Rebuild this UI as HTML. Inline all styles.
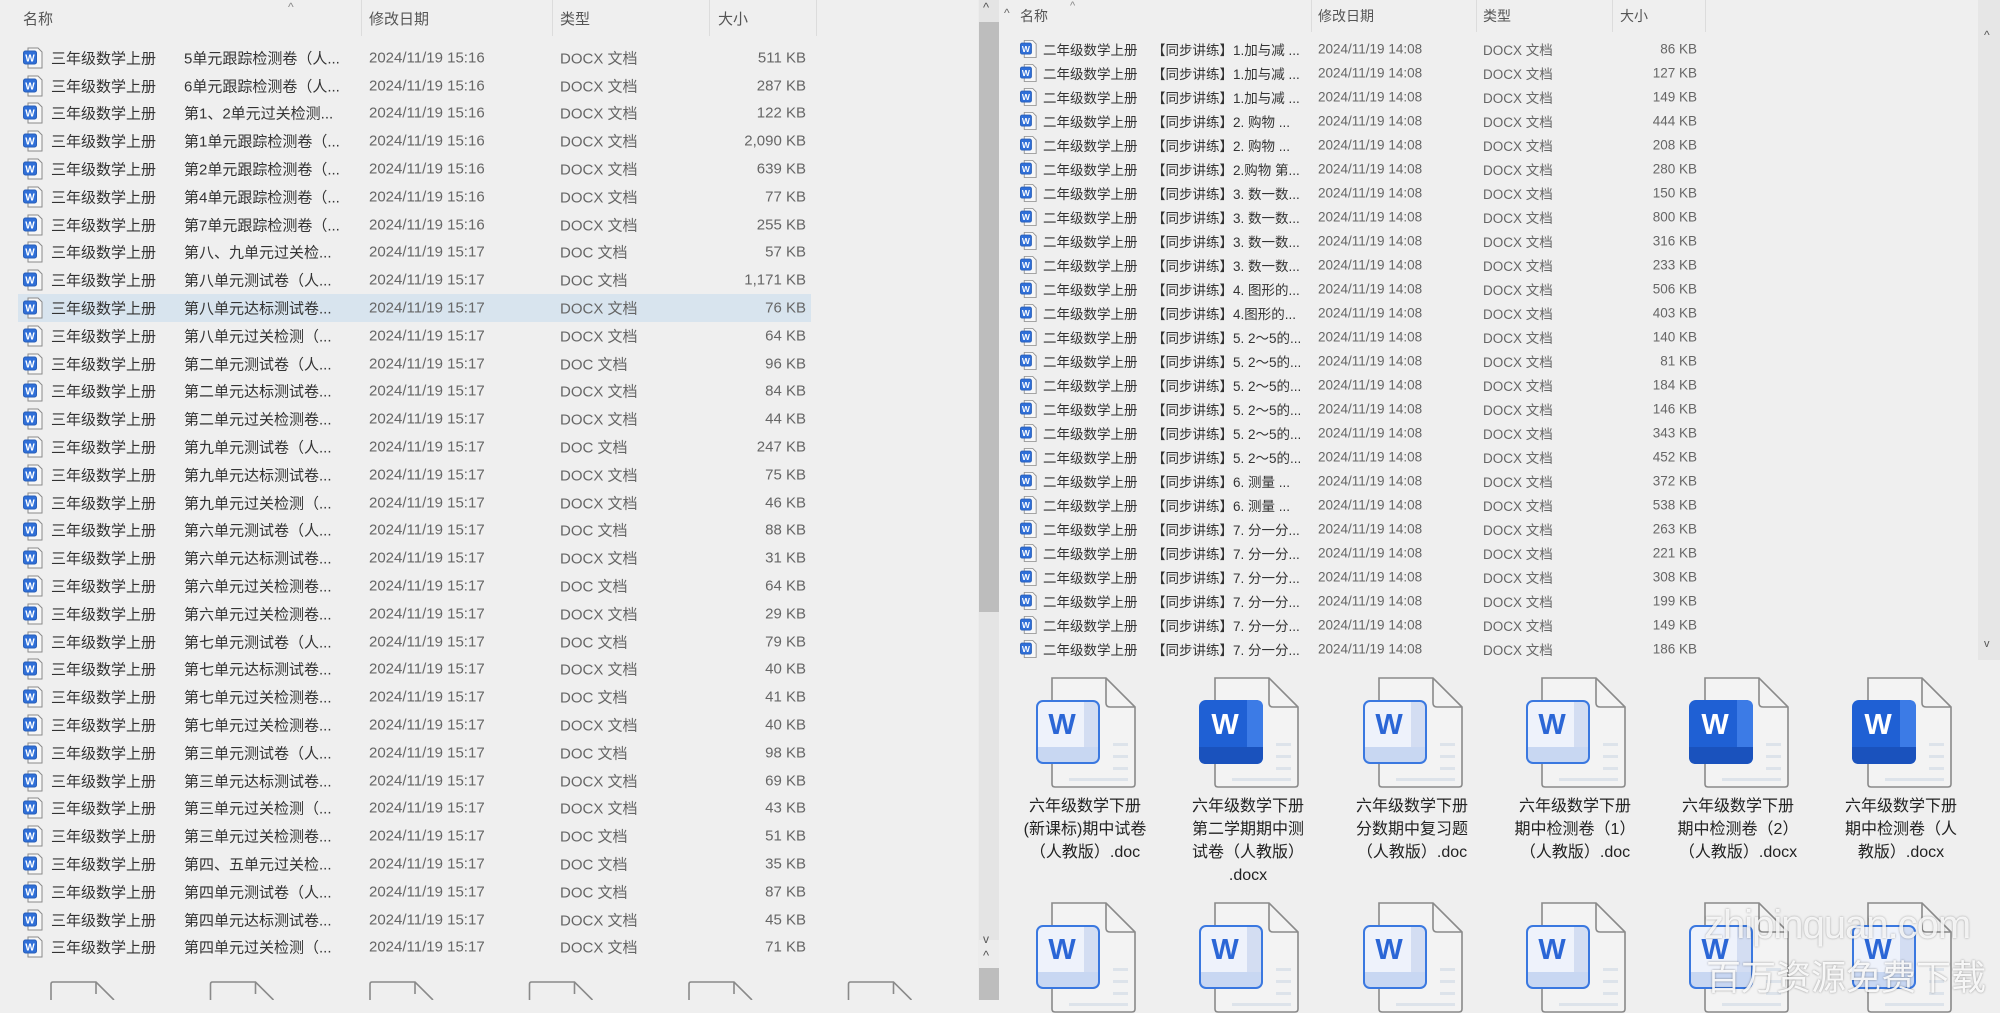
<!DOCTYPE html>
<html><head><meta charset="utf-8">
<style>
*{margin:0;padding:0;box-sizing:border-box}
body{width:2000px;height:1000px;overflow:hidden;background:#efefef;font-family:"Liberation Sans","Noto Sans CJK SC",sans-serif;position:relative}
.a{position:absolute;white-space:nowrap}
.L{position:absolute;left:0;width:978px;height:27.8px;font-size:15px;color:#555}
.L span,.R span{position:absolute;top:50%;transform:translateY(-50%)}
.L .n{left:51px;color:#333}.L .m{left:184px;color:#333}.L .d{left:369px;color:#666}.L .t{left:560px;color:#666}.L .s{right:172px;color:#666}
.L svg,.R svg{position:absolute;top:50%;transform:translateY(-50%)}
.L svg{left:23px}
.R{position:absolute;left:1000px;width:976px;height:24.03px;font-size:13.5px}
.R .n{left:43px;color:#333}.R .m{left:152px;color:#333}.R .d{left:318px;color:#666}.R .t{left:483px;color:#666}.R .s{right:279px;color:#666}
.R svg{left:20px}
.sel{background:#d8e4ee;left:18px;width:793px}
.sel svg{left:5px}.sel .n{left:33px}.sel .m{left:166px}.sel .d{left:351px}.sel .t{left:542px}.sel .s{right:5px}
.h{position:absolute;font-size:15px;color:#555}
.sep{position:absolute;width:1px;background:#dcdcdc}
.lab{position:absolute;width:160px;text-align:center;font-size:16px;line-height:23px;color:#222}
</style></head><body>
<svg width="0" height="0" style="position:absolute">
<defs>
<symbol id="si" viewBox="0 0 20 22"><path d="M5 1H15L19 5V21H5Z" fill="#f7f7f7" stroke="#8a8a8a" stroke-width="1"/><rect x="0.5" y="4" width="13" height="13" rx="2" fill="#2f6fd8" stroke="#2a5fb8"/><text x="7" y="14.5" font-size="10" font-weight="bold" fill="#fff" text-anchor="middle" font-family="Liberation Sans">W</text></symbol>
<symbol id="bl" viewBox="0 0 100 111"><path d="M16 1H70L99 30V107Q99 110 96 110H19Q16 110 16 107Z" fill="#f3f3f3" stroke="#8a8a8a" stroke-width="1.6"/><path d="M70 1V26Q70 30 74 30H99" fill="none" stroke="#8a8a8a" stroke-width="1.6"/><rect x="77" y="66" width="15" height="3" fill="#dde3ea"/><rect x="77" y="78" width="15" height="3" fill="#dde3ea"/><rect x="77" y="90" width="15" height="3" fill="#dde3ea"/><rect x="33" y="101" width="59" height="3" fill="#dde3ea"/><rect x="1" y="24" width="62" height="62" rx="6" fill="#eef2fb"/><rect x="48" y="25" width="14" height="60" fill="#d3ddf2"/><rect x="2" y="70" width="60" height="15" fill="#c8d7f2"/><rect x="1" y="24" width="62" height="62" rx="6" fill="none" stroke="#3a78e0" stroke-width="2"/><text x="26" y="57" font-size="29" font-weight="bold" fill="#2b66d6" text-anchor="middle" font-family="Liberation Sans">W</text></symbol>
<symbol id="bd" viewBox="0 0 100 111"><path d="M16 1H70L99 30V107Q99 110 96 110H19Q16 110 16 107Z" fill="#f3f3f3" stroke="#8a8a8a" stroke-width="1.6"/><path d="M70 1V26Q70 30 74 30H99" fill="none" stroke="#8a8a8a" stroke-width="1.6"/><rect x="77" y="66" width="15" height="3" fill="#dde3ea"/><rect x="77" y="78" width="15" height="3" fill="#dde3ea"/><rect x="77" y="90" width="15" height="3" fill="#dde3ea"/><rect x="33" y="101" width="59" height="3" fill="#dde3ea"/><rect x="0" y="23" width="64" height="64" rx="7" fill="#1f60d4"/><path d="M48 23H57Q64 23 64 30V80Q64 87 57 87H48Z" fill="#3c7be6"/><path d="M0 70H64V80Q64 87 57 87H7Q0 87 0 80Z" fill="#1a52bd"/><text x="26" y="57" font-size="29" font-weight="bold" fill="#fff" text-anchor="middle" font-family="Liberation Sans">W</text></symbol>
</defs></svg>

<!-- LEFT HEADER -->
<div class="a" style="left:288px;top:0;font-size:12px;color:#888">^</div>
<div class="h" style="left:23px;top:8px">名称</div>
<div class="h" style="left:369px;top:8px">修改日期</div>
<div class="h" style="left:560px;top:8px">类型</div>
<div class="h" style="left:718px;top:8px">大小</div>
<div class="sep" style="left:361px;top:0;height:36px"></div>
<div class="sep" style="left:552px;top:0;height:36px"></div>
<div class="sep" style="left:709px;top:0;height:36px"></div>
<div class="sep" style="left:816px;top:0;height:36px"></div>

<!-- LEFT ROWS -->
<div class="L" style="top:44px"><svg width="20" height="22"><use href="#si"/></svg><span class="n">三年级数学上册</span><span class="m">5单元跟踪检测卷（人...</span><span class="d">2024/11/19 15:16</span><span class="t">DOCX 文档</span><span class="s">511 KB</span></div>
<div class="L" style="top:71.8px"><svg width="20" height="22"><use href="#si"/></svg><span class="n">三年级数学上册</span><span class="m">6单元跟踪检测卷（人...</span><span class="d">2024/11/19 15:16</span><span class="t">DOCX 文档</span><span class="s">287 KB</span></div>
<div class="L" style="top:99.6px"><svg width="20" height="22"><use href="#si"/></svg><span class="n">三年级数学上册</span><span class="m">第1、2单元过关检测...</span><span class="d">2024/11/19 15:16</span><span class="t">DOCX 文档</span><span class="s">122 KB</span></div>
<div class="L" style="top:127.4px"><svg width="20" height="22"><use href="#si"/></svg><span class="n">三年级数学上册</span><span class="m">第1单元跟踪检测卷（...</span><span class="d">2024/11/19 15:16</span><span class="t">DOCX 文档</span><span class="s">2,090 KB</span></div>
<div class="L" style="top:155.2px"><svg width="20" height="22"><use href="#si"/></svg><span class="n">三年级数学上册</span><span class="m">第2单元跟踪检测卷（...</span><span class="d">2024/11/19 15:16</span><span class="t">DOCX 文档</span><span class="s">639 KB</span></div>
<div class="L" style="top:183px"><svg width="20" height="22"><use href="#si"/></svg><span class="n">三年级数学上册</span><span class="m">第4单元跟踪检测卷（...</span><span class="d">2024/11/19 15:16</span><span class="t">DOCX 文档</span><span class="s">77 KB</span></div>
<div class="L" style="top:210.8px"><svg width="20" height="22"><use href="#si"/></svg><span class="n">三年级数学上册</span><span class="m">第7单元跟踪检测卷（...</span><span class="d">2024/11/19 15:16</span><span class="t">DOCX 文档</span><span class="s">255 KB</span></div>
<div class="L" style="top:238.6px"><svg width="20" height="22"><use href="#si"/></svg><span class="n">三年级数学上册</span><span class="m">第八、九单元过关检...</span><span class="d">2024/11/19 15:17</span><span class="t">DOC 文档</span><span class="s">57 KB</span></div>
<div class="L" style="top:266.4px"><svg width="20" height="22"><use href="#si"/></svg><span class="n">三年级数学上册</span><span class="m">第八单元测试卷（人...</span><span class="d">2024/11/19 15:17</span><span class="t">DOC 文档</span><span class="s">1,171 KB</span></div>
<div class="L sel" style="top:294.2px"><svg width="20" height="22"><use href="#si"/></svg><span class="n">三年级数学上册</span><span class="m">第八单元达标测试卷...</span><span class="d">2024/11/19 15:17</span><span class="t">DOCX 文档</span><span class="s">76 KB</span></div>
<div class="L" style="top:322px"><svg width="20" height="22"><use href="#si"/></svg><span class="n">三年级数学上册</span><span class="m">第八单元过关检测（...</span><span class="d">2024/11/19 15:17</span><span class="t">DOCX 文档</span><span class="s">64 KB</span></div>
<div class="L" style="top:349.8px"><svg width="20" height="22"><use href="#si"/></svg><span class="n">三年级数学上册</span><span class="m">第二单元测试卷（人...</span><span class="d">2024/11/19 15:17</span><span class="t">DOC 文档</span><span class="s">96 KB</span></div>
<div class="L" style="top:377.6px"><svg width="20" height="22"><use href="#si"/></svg><span class="n">三年级数学上册</span><span class="m">第二单元达标测试卷...</span><span class="d">2024/11/19 15:17</span><span class="t">DOCX 文档</span><span class="s">84 KB</span></div>
<div class="L" style="top:405.4px"><svg width="20" height="22"><use href="#si"/></svg><span class="n">三年级数学上册</span><span class="m">第二单元过关检测卷...</span><span class="d">2024/11/19 15:17</span><span class="t">DOCX 文档</span><span class="s">44 KB</span></div>
<div class="L" style="top:433.2px"><svg width="20" height="22"><use href="#si"/></svg><span class="n">三年级数学上册</span><span class="m">第九单元测试卷（人...</span><span class="d">2024/11/19 15:17</span><span class="t">DOC 文档</span><span class="s">247 KB</span></div>
<div class="L" style="top:461px"><svg width="20" height="22"><use href="#si"/></svg><span class="n">三年级数学上册</span><span class="m">第九单元达标测试卷...</span><span class="d">2024/11/19 15:17</span><span class="t">DOCX 文档</span><span class="s">75 KB</span></div>
<div class="L" style="top:488.8px"><svg width="20" height="22"><use href="#si"/></svg><span class="n">三年级数学上册</span><span class="m">第九单元过关检测（...</span><span class="d">2024/11/19 15:17</span><span class="t">DOCX 文档</span><span class="s">46 KB</span></div>
<div class="L" style="top:516.6px"><svg width="20" height="22"><use href="#si"/></svg><span class="n">三年级数学上册</span><span class="m">第六单元测试卷（人...</span><span class="d">2024/11/19 15:17</span><span class="t">DOC 文档</span><span class="s">88 KB</span></div>
<div class="L" style="top:544.4px"><svg width="20" height="22"><use href="#si"/></svg><span class="n">三年级数学上册</span><span class="m">第六单元达标测试卷...</span><span class="d">2024/11/19 15:17</span><span class="t">DOCX 文档</span><span class="s">31 KB</span></div>
<div class="L" style="top:572.2px"><svg width="20" height="22"><use href="#si"/></svg><span class="n">三年级数学上册</span><span class="m">第六单元过关检测卷...</span><span class="d">2024/11/19 15:17</span><span class="t">DOC 文档</span><span class="s">64 KB</span></div>
<div class="L" style="top:600px"><svg width="20" height="22"><use href="#si"/></svg><span class="n">三年级数学上册</span><span class="m">第六单元过关检测卷...</span><span class="d">2024/11/19 15:17</span><span class="t">DOCX 文档</span><span class="s">29 KB</span></div>
<div class="L" style="top:627.8px"><svg width="20" height="22"><use href="#si"/></svg><span class="n">三年级数学上册</span><span class="m">第七单元测试卷（人...</span><span class="d">2024/11/19 15:17</span><span class="t">DOC 文档</span><span class="s">79 KB</span></div>
<div class="L" style="top:655.6px"><svg width="20" height="22"><use href="#si"/></svg><span class="n">三年级数学上册</span><span class="m">第七单元达标测试卷...</span><span class="d">2024/11/19 15:17</span><span class="t">DOCX 文档</span><span class="s">40 KB</span></div>
<div class="L" style="top:683.4px"><svg width="20" height="22"><use href="#si"/></svg><span class="n">三年级数学上册</span><span class="m">第七单元过关检测卷...</span><span class="d">2024/11/19 15:17</span><span class="t">DOC 文档</span><span class="s">41 KB</span></div>
<div class="L" style="top:711.2px"><svg width="20" height="22"><use href="#si"/></svg><span class="n">三年级数学上册</span><span class="m">第七单元过关检测卷...</span><span class="d">2024/11/19 15:17</span><span class="t">DOCX 文档</span><span class="s">40 KB</span></div>
<div class="L" style="top:739px"><svg width="20" height="22"><use href="#si"/></svg><span class="n">三年级数学上册</span><span class="m">第三单元测试卷（人...</span><span class="d">2024/11/19 15:17</span><span class="t">DOC 文档</span><span class="s">98 KB</span></div>
<div class="L" style="top:766.8px"><svg width="20" height="22"><use href="#si"/></svg><span class="n">三年级数学上册</span><span class="m">第三单元达标测试卷...</span><span class="d">2024/11/19 15:17</span><span class="t">DOCX 文档</span><span class="s">69 KB</span></div>
<div class="L" style="top:794.6px"><svg width="20" height="22"><use href="#si"/></svg><span class="n">三年级数学上册</span><span class="m">第三单元过关检测（...</span><span class="d">2024/11/19 15:17</span><span class="t">DOCX 文档</span><span class="s">43 KB</span></div>
<div class="L" style="top:822.4px"><svg width="20" height="22"><use href="#si"/></svg><span class="n">三年级数学上册</span><span class="m">第三单元过关检测卷...</span><span class="d">2024/11/19 15:17</span><span class="t">DOC 文档</span><span class="s">51 KB</span></div>
<div class="L" style="top:850.2px"><svg width="20" height="22"><use href="#si"/></svg><span class="n">三年级数学上册</span><span class="m">第四、五单元过关检...</span><span class="d">2024/11/19 15:17</span><span class="t">DOC 文档</span><span class="s">35 KB</span></div>
<div class="L" style="top:878px"><svg width="20" height="22"><use href="#si"/></svg><span class="n">三年级数学上册</span><span class="m">第四单元测试卷（人...</span><span class="d">2024/11/19 15:17</span><span class="t">DOC 文档</span><span class="s">87 KB</span></div>
<div class="L" style="top:905.8px"><svg width="20" height="22"><use href="#si"/></svg><span class="n">三年级数学上册</span><span class="m">第四单元达标测试卷...</span><span class="d">2024/11/19 15:17</span><span class="t">DOCX 文档</span><span class="s">45 KB</span></div>
<div class="L" style="top:933.6px"><svg width="20" height="22"><use href="#si"/></svg><span class="n">三年级数学上册</span><span class="m">第四单元过关检测（...</span><span class="d">2024/11/19 15:17</span><span class="t">DOCX 文档</span><span class="s">71 KB</span></div>

<!-- left bottom page outlines -->
<svg class="a" style="left:40px;top:980px" width="930" height="20">
<g fill="none" stroke="#8a8a8a" stroke-width="1.6">
<path d="M11 20V4Q11 2 13 2H56L74 20M56 2V14"/>
<path d="M170.5 20V4Q170.5 2 172.5 2H215.5L233.5 20M215.5 2V14"/>
<path d="M330 20V4Q330 2 332 2H375L393 20M375 2V14"/>
<path d="M489.5 20V4Q489.5 2 491.5 2H534.5L552.5 20M534.5 2V14"/>
<path d="M649 20V4Q649 2 651 2H694L712 20M694 2V14"/>
<path d="M808.5 20V4Q808.5 2 810.5 2H853.5L871.5 20M853.5 2V14"/>
</g></svg>

<!-- left scrollbar -->
<div class="a" style="left:978px;top:0;width:21px;height:1000px;background:#ececec"></div>
<div class="a" style="left:979px;top:0;width:20px;height:940px;background:#e4e4e4"></div>
<div class="a" style="left:979px;top:22px;width:20px;height:590px;background:#bdbdbd"></div>
<div class="a" style="left:983px;top:0;font-size:13px;color:#555">^</div>
<div class="a" style="left:983px;top:932px;font-size:12px;color:#555">v</div>
<div class="a" style="left:983px;top:948px;font-size:13px;color:#555">^</div>
<div class="a" style="left:979px;top:968px;width:20px;height:32px;background:#bdbdbd"></div>

<!-- RIGHT HEADER -->
<div class="a" style="left:1070px;top:0;font-size:11px;color:#888">^</div>
<div class="a" style="left:1004px;top:6px;font-size:12px;color:#666">^</div>
<div class="h" style="left:1020px;top:6px;font-size:14px">名称</div>
<div class="h" style="left:1318px;top:6px;font-size:14px">修改日期</div>
<div class="h" style="left:1483px;top:6px;font-size:14px">类型</div>
<div class="h" style="left:1620px;top:6px;font-size:14px">大小</div>
<div class="sep" style="left:1311px;top:0;height:32px"></div>
<div class="sep" style="left:1476px;top:0;height:32px"></div>
<div class="sep" style="left:1612px;top:0;height:32px"></div>
<div class="sep" style="left:1705px;top:0;height:32px"></div>

<!-- RIGHT ROWS -->
<div class="R" style="top:36.5px"><svg width="17" height="19"><use href="#si"/></svg><span class="n">二年级数学上册</span><span class="m">【同步讲练】1.加与减 ...</span><span class="d">2024/11/19 14:08</span><span class="t">DOCX 文档</span><span class="s">86 KB</span></div>
<div class="R" style="top:60.53px"><svg width="17" height="19"><use href="#si"/></svg><span class="n">二年级数学上册</span><span class="m">【同步讲练】1.加与减 ...</span><span class="d">2024/11/19 14:08</span><span class="t">DOCX 文档</span><span class="s">127 KB</span></div>
<div class="R" style="top:84.56px"><svg width="17" height="19"><use href="#si"/></svg><span class="n">二年级数学上册</span><span class="m">【同步讲练】1.加与减 ...</span><span class="d">2024/11/19 14:08</span><span class="t">DOCX 文档</span><span class="s">149 KB</span></div>
<div class="R" style="top:108.59px"><svg width="17" height="19"><use href="#si"/></svg><span class="n">二年级数学上册</span><span class="m">【同步讲练】2. 购物 ...</span><span class="d">2024/11/19 14:08</span><span class="t">DOCX 文档</span><span class="s">444 KB</span></div>
<div class="R" style="top:132.62px"><svg width="17" height="19"><use href="#si"/></svg><span class="n">二年级数学上册</span><span class="m">【同步讲练】2. 购物 ...</span><span class="d">2024/11/19 14:08</span><span class="t">DOCX 文档</span><span class="s">208 KB</span></div>
<div class="R" style="top:156.65px"><svg width="17" height="19"><use href="#si"/></svg><span class="n">二年级数学上册</span><span class="m">【同步讲练】2.购物 第...</span><span class="d">2024/11/19 14:08</span><span class="t">DOCX 文档</span><span class="s">280 KB</span></div>
<div class="R" style="top:180.68px"><svg width="17" height="19"><use href="#si"/></svg><span class="n">二年级数学上册</span><span class="m">【同步讲练】3. 数一数...</span><span class="d">2024/11/19 14:08</span><span class="t">DOCX 文档</span><span class="s">150 KB</span></div>
<div class="R" style="top:204.71px"><svg width="17" height="19"><use href="#si"/></svg><span class="n">二年级数学上册</span><span class="m">【同步讲练】3. 数一数...</span><span class="d">2024/11/19 14:08</span><span class="t">DOCX 文档</span><span class="s">800 KB</span></div>
<div class="R" style="top:228.74px"><svg width="17" height="19"><use href="#si"/></svg><span class="n">二年级数学上册</span><span class="m">【同步讲练】3. 数一数...</span><span class="d">2024/11/19 14:08</span><span class="t">DOCX 文档</span><span class="s">316 KB</span></div>
<div class="R" style="top:252.77px"><svg width="17" height="19"><use href="#si"/></svg><span class="n">二年级数学上册</span><span class="m">【同步讲练】3. 数一数...</span><span class="d">2024/11/19 14:08</span><span class="t">DOCX 文档</span><span class="s">233 KB</span></div>
<div class="R" style="top:276.8px"><svg width="17" height="19"><use href="#si"/></svg><span class="n">二年级数学上册</span><span class="m">【同步讲练】4. 图形的...</span><span class="d">2024/11/19 14:08</span><span class="t">DOCX 文档</span><span class="s">506 KB</span></div>
<div class="R" style="top:300.83px"><svg width="17" height="19"><use href="#si"/></svg><span class="n">二年级数学上册</span><span class="m">【同步讲练】4.图形的...</span><span class="d">2024/11/19 14:08</span><span class="t">DOCX 文档</span><span class="s">403 KB</span></div>
<div class="R" style="top:324.86px"><svg width="17" height="19"><use href="#si"/></svg><span class="n">二年级数学上册</span><span class="m">【同步讲练】5. 2～5的...</span><span class="d">2024/11/19 14:08</span><span class="t">DOCX 文档</span><span class="s">140 KB</span></div>
<div class="R" style="top:348.89px"><svg width="17" height="19"><use href="#si"/></svg><span class="n">二年级数学上册</span><span class="m">【同步讲练】5. 2～5的...</span><span class="d">2024/11/19 14:08</span><span class="t">DOCX 文档</span><span class="s">81 KB</span></div>
<div class="R" style="top:372.92px"><svg width="17" height="19"><use href="#si"/></svg><span class="n">二年级数学上册</span><span class="m">【同步讲练】5. 2～5的...</span><span class="d">2024/11/19 14:08</span><span class="t">DOCX 文档</span><span class="s">184 KB</span></div>
<div class="R" style="top:396.95px"><svg width="17" height="19"><use href="#si"/></svg><span class="n">二年级数学上册</span><span class="m">【同步讲练】5. 2～5的...</span><span class="d">2024/11/19 14:08</span><span class="t">DOCX 文档</span><span class="s">146 KB</span></div>
<div class="R" style="top:420.98px"><svg width="17" height="19"><use href="#si"/></svg><span class="n">二年级数学上册</span><span class="m">【同步讲练】5. 2～5的...</span><span class="d">2024/11/19 14:08</span><span class="t">DOCX 文档</span><span class="s">343 KB</span></div>
<div class="R" style="top:445.01px"><svg width="17" height="19"><use href="#si"/></svg><span class="n">二年级数学上册</span><span class="m">【同步讲练】5. 2～5的...</span><span class="d">2024/11/19 14:08</span><span class="t">DOCX 文档</span><span class="s">452 KB</span></div>
<div class="R" style="top:469.04px"><svg width="17" height="19"><use href="#si"/></svg><span class="n">二年级数学上册</span><span class="m">【同步讲练】6. 测量 ...</span><span class="d">2024/11/19 14:08</span><span class="t">DOCX 文档</span><span class="s">372 KB</span></div>
<div class="R" style="top:493.07px"><svg width="17" height="19"><use href="#si"/></svg><span class="n">二年级数学上册</span><span class="m">【同步讲练】6. 测量 ...</span><span class="d">2024/11/19 14:08</span><span class="t">DOCX 文档</span><span class="s">538 KB</span></div>
<div class="R" style="top:517.1px"><svg width="17" height="19"><use href="#si"/></svg><span class="n">二年级数学上册</span><span class="m">【同步讲练】7. 分一分...</span><span class="d">2024/11/19 14:08</span><span class="t">DOCX 文档</span><span class="s">263 KB</span></div>
<div class="R" style="top:541.13px"><svg width="17" height="19"><use href="#si"/></svg><span class="n">二年级数学上册</span><span class="m">【同步讲练】7. 分一分...</span><span class="d">2024/11/19 14:08</span><span class="t">DOCX 文档</span><span class="s">221 KB</span></div>
<div class="R" style="top:565.16px"><svg width="17" height="19"><use href="#si"/></svg><span class="n">二年级数学上册</span><span class="m">【同步讲练】7. 分一分...</span><span class="d">2024/11/19 14:08</span><span class="t">DOCX 文档</span><span class="s">308 KB</span></div>
<div class="R" style="top:589.19px"><svg width="17" height="19"><use href="#si"/></svg><span class="n">二年级数学上册</span><span class="m">【同步讲练】7. 分一分...</span><span class="d">2024/11/19 14:08</span><span class="t">DOCX 文档</span><span class="s">199 KB</span></div>
<div class="R" style="top:613.22px"><svg width="17" height="19"><use href="#si"/></svg><span class="n">二年级数学上册</span><span class="m">【同步讲练】7. 分一分...</span><span class="d">2024/11/19 14:08</span><span class="t">DOCX 文档</span><span class="s">149 KB</span></div>
<div class="R" style="top:637.25px"><svg width="17" height="19"><use href="#si"/></svg><span class="n">二年级数学上册</span><span class="m">【同步讲练】7. 分一分...</span><span class="d">2024/11/19 14:08</span><span class="t">DOCX 文档</span><span class="s">186 KB</span></div>

<!-- right scrollbar -->
<div class="a" style="left:1978px;top:0;width:22px;height:660px;background:#e6e6e6"></div>
<div class="a" style="left:1984px;top:28px;font-size:12px;color:#555">^</div>
<div class="a" style="left:1984px;top:638px;font-size:11px;color:#555">v</div>

<!-- big icons row 1 -->
<svg class="a" style="left:1036px;top:677px" width="100" height="111"><use href="#bl"/></svg>
<svg class="a" style="left:1199px;top:677px" width="100" height="111"><use href="#bd"/></svg>
<svg class="a" style="left:1363px;top:677px" width="100" height="111"><use href="#bl"/></svg>
<svg class="a" style="left:1526px;top:677px" width="100" height="111"><use href="#bl"/></svg>
<svg class="a" style="left:1689px;top:677px" width="100" height="111"><use href="#bd"/></svg>
<svg class="a" style="left:1852px;top:677px" width="100" height="111"><use href="#bd"/></svg>

<div class="lab" style="left:1005px;top:795px">六年级数学下册<br>(新课标)期中试卷<br>（人教版）.doc</div>
<div class="lab" style="left:1168px;top:795px">六年级数学下册<br>第二学期期中测<br>试卷（人教版）<br>.docx</div>
<div class="lab" style="left:1332px;top:795px">六年级数学下册<br>分数期中复习题<br>（人教版）.doc</div>
<div class="lab" style="left:1495px;top:795px">六年级数学下册<br>期中检测卷（1）<br>（人教版）.doc</div>
<div class="lab" style="left:1658px;top:795px">六年级数学下册<br>期中检测卷（2）<br>（人教版）.docx</div>
<div class="lab" style="left:1821px;top:795px">六年级数学下册<br>期中检测卷（人<br>教版）.docx</div>

<!-- big icons row 2 -->
<svg class="a" style="left:1036px;top:902px" width="100" height="111"><use href="#bl"/></svg>
<svg class="a" style="left:1199px;top:902px" width="100" height="111"><use href="#bl"/></svg>
<svg class="a" style="left:1363px;top:902px" width="100" height="111"><use href="#bl"/></svg>
<svg class="a" style="left:1526px;top:902px" width="100" height="111"><use href="#bl"/></svg>
<svg class="a" style="left:1689px;top:902px" width="100" height="111"><use href="#bl"/></svg>
<svg class="a" style="left:1852px;top:902px" width="100" height="111"><use href="#bl"/></svg>

<!-- watermark -->
<div class="a" style="left:1704px;top:903px;font-size:40px;color:rgba(255,255,255,0.85);text-shadow:0 0 2px rgba(0,0,0,0.35);letter-spacing:-1px">zhipinquan.com</div>
<div class="a" style="left:1706px;top:950px;font-size:35px;color:rgba(255,255,255,0.9);text-shadow:0 0 2px rgba(0,0,0,0.4)">百万资源免费下载</div>
</body></html>
